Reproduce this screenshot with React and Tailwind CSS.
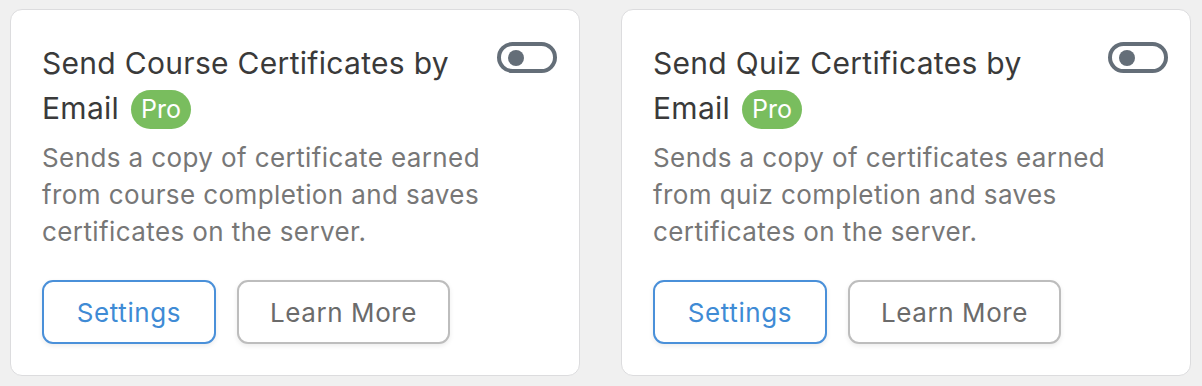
import React from "react";

const cards = [
  {
    title: "Send Course Certificates by",
    desc: "Sends a copy of certificate earned from course completion and saves certificates on the server.",
  },
  {
    title: "Send Quiz Certificates by",
    desc: "Sends a copy of certificates earned from quiz completion and saves certificates on the server.",
  },
];

function Toggle() {
  return (
    <div className="mt-[1px] flex h-[31px] w-[60px] shrink-0 items-center rounded-full border-[4px] border-[#646e78] pl-[7px]">
      <div className="h-[16px] w-[16px] rounded-full bg-[#646e78]" />
    </div>
  );
}

function Card({ title, desc }) {
  return (
    <div className="flex h-[367px] w-[570px] flex-col rounded-[12px] border border-[#dcdcde] bg-white pl-[31px] pr-[22px] pt-[31px]">
      <div className="flex justify-between">
        <h2 className="w-[420px] text-[30px] leading-[45px] tracking-[0.3px] text-[#3a3a3a]">
          {title} Email{" "}
          <span className="ml-[3px] inline-flex h-[39px] items-center rounded-full bg-[#79bd5e] px-[10px] align-[1px] text-[25px] leading-none tracking-normal text-white">
            Pro
          </span>
        </h2>
        <Toggle />
      </div>
      <p className="mt-[8px] w-[475px] text-[26px] leading-[37px] tracking-[0.4px] text-[#777777]">{desc}</p>
      <div className="mt-[30px] flex gap-[21px]">
        <button className="h-[64px] w-[174px] rounded-[11px] border-2 border-[#4a90d9] bg-white text-[26px] tracking-[0.6px] text-[#3f8bd5] shadow-[0_2px_5px_rgba(0,0,0,0.08)]">
          Settings
        </button>
        <button className="h-[64px] w-[213px] rounded-[11px] border-2 border-[#bdbdbd] bg-white text-[26px] tracking-[0.6px] text-[#6b6b6b] shadow-[0_2px_5px_rgba(0,0,0,0.08)]">
          Learn More
        </button>
      </div>
    </div>
  );
}

export default function App() {
  return (
    <div
      className="flex h-[386px] w-[1202px] gap-[41px] bg-[#f0f0f0] pl-[10px] pt-[9px]"
      style={{ fontFamily: 'Inter, "Liberation Sans", sans-serif' }}
    >
      {cards.map((c) => (
        <Card key={c.title} {...c} />
      ))}
    </div>
  );
}
